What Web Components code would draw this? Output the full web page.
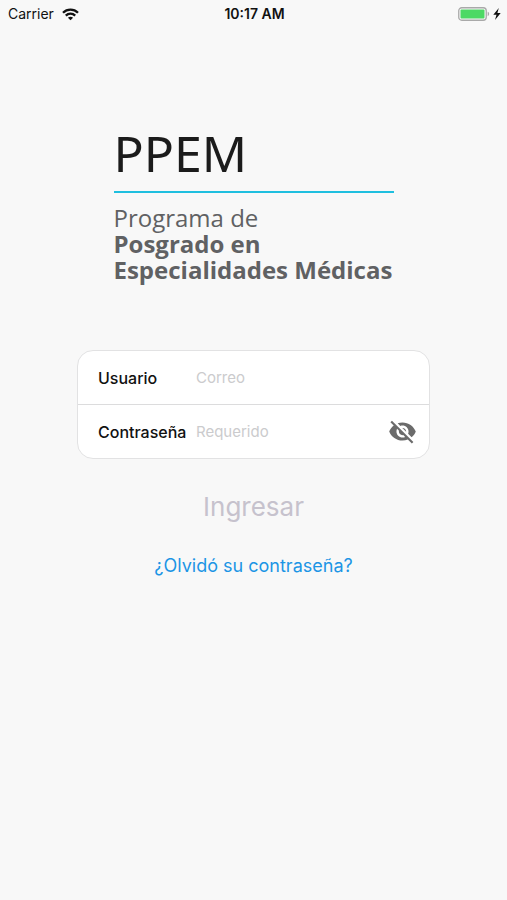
<!DOCTYPE html>
<html lang="es">
<head>
<meta charset="utf-8">
<meta name="viewport" content="width=device-width, initial-scale=1">
<title>PPEM</title>
<style>
    body{
        margin: 0;
        background-color: #F8F8F8;
        font-family: Inter, "Liberation Sans", sans-serif;
        color: #111;
    }
</style>
</head>
<body>
<login-page></login-page>

<script>
class StatusBar extends HTMLElement{
    constructor(){
        super()
        this.attachShadow({mode : 'open'})
    }
    getTemplate(){
        return `
            <style>
                :host{
                    display: grid;
                    grid-template-columns: 1fr auto 1fr;
                    align-items: center;
                    height: 28px;
                    padding: 0 6px 0 8px;
                    font-size: 14px;
                    line-height: 28px;
                }
                .carrier,.battery{
                    display: flex;
                    align-items: center;
                    gap: 8px;
                }
                .battery{
                    justify-content: flex-end;
                    gap: 3px;
                }
                .time{
                    font-weight: 600;
                }
                svg{
                    display: block;
                }
            </style>
            <div class="carrier">
                <span><slot name="carrier"></slot></span>
                <svg width="17" height="13" viewBox="0 0 17 13" fill="none" stroke="#111" stroke-width="2.3">
                    <path d="M1 4.700C5.200 .5 11.800 .5 16 4.700"/>
                    <path d="M3.800 7.600C6.400 5 10.600 5 13.200 7.600"/>
                    <path d="M8.500 12.300L5.900 9.700C7.400 8.300 9.600 8.300 11.100 9.700Z" fill="#111" stroke="none"/>
                </svg>
            </div>
            <div class="time"><slot name="time"></slot></div>
            <div class="battery">
                <svg width="32" height="14" viewBox="0 0 32 14">
                    <rect x=".75" y=".75" width="27.500" height="12.500" rx="3" fill="#F8F8F8" stroke="#A9A9A9" stroke-width="1.300"/>
                    <rect x="2.500" y="2.500" width="24" height="9" rx="1" fill="#4CD964"/>
                    <path d="M29.700 4.800C31.600 5.400 31.600 8.600 29.700 9.200Z" fill="#A9A9A9"/>
                </svg>
                <svg width="8" height="12" viewBox="0 0 8 12">
                    <path d="M5.800 0L.3 6.800H3.500L2 12L7.700 4.900H4.400Z" fill="#111"/>
                </svg>
            </div>
        `
    }
    connectedCallback(){
        this.shadowRoot.innerHTML = this.getTemplate()
    }
}

class BrandLogo extends HTMLElement{
    constructor(){
        super()
        this.attachShadow({mode : 'open'})
    }
    getTemplate(){
        return `
            <style>
                :host{
                    display: block;
                    width: 280px;
                    font-family: "Open Sans", "Noto Sans", sans-serif;
                    color: #606163;
                    white-space: nowrap;
                }
                h1{
                    margin: 0;
                    padding-bottom: 6px;
                    border-bottom: 2px solid #1FBFDF;
                    font-family: "Noto Sans", sans-serif;
                    font-size: 50px;
                    line-height: 64px;
                    font-weight: 400;
                    color: #1B1B1B;
                }
                p{
                    margin: 12px 0 0;
                    font-size: 24px;
                    line-height: 26px;
                }
                strong{
                    display: block;
                    font-weight: 700;
                }
            </style>
            <h1><slot name="short"></slot></h1>
            <p><slot></slot><strong><slot name="line1"></slot></strong><strong><slot name="line2"></slot></strong></p>
        `
    }
    connectedCallback(){
        this.shadowRoot.innerHTML = this.getTemplate()
    }
}

class LoginField extends HTMLElement{
    constructor(){
        super()
        this.attachShadow({mode : 'open'})
    }
    getTemplate(){
        const type = this.getAttribute('type') || 'text'
        const hint = this.getAttribute('placeholder') || ''
        return `
            <style>
                :host{
                    display: flex;
                    align-items: center;
                    height: 53px;
                    padding: 0 12px 0 20px;
                    font-size: 15px;
                }
                label{
                    flex: 0 0 98px;
                    font-size: 16px;
                    font-weight: 500;
                }
                input{
                    flex: 1;
                    min-width: 0;
                    padding: 0;
                    border: 0;
                    outline: 0;
                    background: transparent;
                    font: inherit;
                    color: #111;
                }
                input::placeholder{
                    color: #CBCBCD;
                }
            </style>
            <label for="field"><slot></slot></label>
            <input id="field" type="${type}" placeholder="${hint}">
            <slot name="action"></slot>
        `
    }
    connectedCallback(){
        this.shadowRoot.innerHTML = this.getTemplate()
    }
    toggle(){
        const input = this.shadowRoot.querySelector('input')
        input.type = input.type === 'password' ? 'text' : 'password'
    }
}

class RevealButton extends HTMLElement{
    constructor(){
        super()
        this.attachShadow({mode : 'open'})
    }
    getTemplate(){
        return `
            <style>
                :host{
                    display: block;
                }
                button{
                    display: block;
                    padding: 0;
                    border: 0;
                    background: none;
                    cursor: pointer;
                }
                svg{
                    display: block;
                }
            </style>
            <button type="button" aria-label="Mostrar contraseña">
                <svg width="29" height="29" viewBox="0 0 24 24" fill="#6B6B6B">
                    <path d="M12 7c2.760 0 5 2.240 5 5 0 .65-.13 1.260-.36 1.830l2.920 2.920c1.510-1.260 2.700-2.890 3.430-4.750-1.730-4.390-6-7.500-11-7.500-1.400 0-2.740.25-3.980.7l2.160 2.160C10.740 7.130 11.350 7 12 7zM2 4.270l2.280 2.280.46.46C3.080 8.300 1.780 10.020 1 12c1.730 4.390 6 7.500 11 7.500 1.550 0 3.030-.3 4.380-.84l.42.42L19.730 22 21 20.730 3.270 3 2 4.270zM7.530 9.800l1.550 1.550c-.05.21-.08.43-.08.65 0 1.660 1.340 3 3 3 .22 0 .44-.03.65-.08l1.550 1.550c-.67.33-1.410.53-2.200.53-2.760 0-5-2.240-5-5 0-.79.2-1.530.53-2.200zm4.310-.78l3.150 3.150.02-.16c0-1.660-1.340-3-3-3l-.17.01z"/>
                </svg>
            </button>
        `
    }
    connectedCallback(){
        this.shadowRoot.innerHTML = this.getTemplate()
        this.shadowRoot.querySelector('button').addEventListener('click', () => {
            this.closest('login-field').toggle()
        })
    }
}

class LoginPage extends HTMLElement{
    constructor(){
        super()
        this.attachShadow({mode : 'open'})
    }
    getTemplate(){
        return `
            <style>
                :host{
                    display: block;
                }
                main{
                    display: flex;
                    flex-direction: column;
                    align-items: center;
                    padding: 93px 77px 40px;
                }
                form{
                    align-self: stretch;
                    display: flex;
                    flex-direction: column;
                    align-items: center;
                    margin-top: 67px;
                }
                .fields{
                    align-self: stretch;
                    border: 1px solid #E2E2E3;
                    border-radius: 16px;
                    background-color: #FFF;
                }
                login-field + login-field{
                    border-top: 1px solid #DCDCDD;
                }
                .enter{
                    margin-top: 28px;
                    padding: 0;
                    border: 0;
                    background: none;
                    font: inherit;
                    font-size: 26px;
                    line-height: 40px;
                    color: #C6C2CD;
                }
                a{
                    margin-top: 26px;
                    font-size: 18px;
                    line-height: 26px;
                    color: #1C95E5;
                    text-decoration: none;
                }
            </style>
            <status-bar>
                <span slot="carrier">Carrier</span>
                <span slot="time">10:17 AM</span>
            </status-bar>
            <main>
                <brand-logo>
                    <span slot="short">PPEM</span>
                    Programa de
                    <span slot="line1">Posgrado en</span>
                    <span slot="line2">Especialidades Médicas</span>
                </brand-logo>
                <form>
                    <div class="fields">
                        <login-field placeholder="Correo">Usuario</login-field>
                        <login-field type="password" placeholder="Requerido">Contraseña<reveal-button slot="action"></reveal-button></login-field>
                    </div>
                    <button class="enter" type="submit" disabled>Ingresar</button>
                    <a href="#">¿Olvidó su contraseña?</a>
                </form>
            </main>
        `
    }
    connectedCallback(){
        this.shadowRoot.innerHTML = this.getTemplate()
    }
}

customElements.define('status-bar', StatusBar)
customElements.define('brand-logo', BrandLogo)
customElements.define('login-field', LoginField)
customElements.define('reveal-button', RevealButton)
customElements.define('login-page', LoginPage)
</script>
</body>
</html>
